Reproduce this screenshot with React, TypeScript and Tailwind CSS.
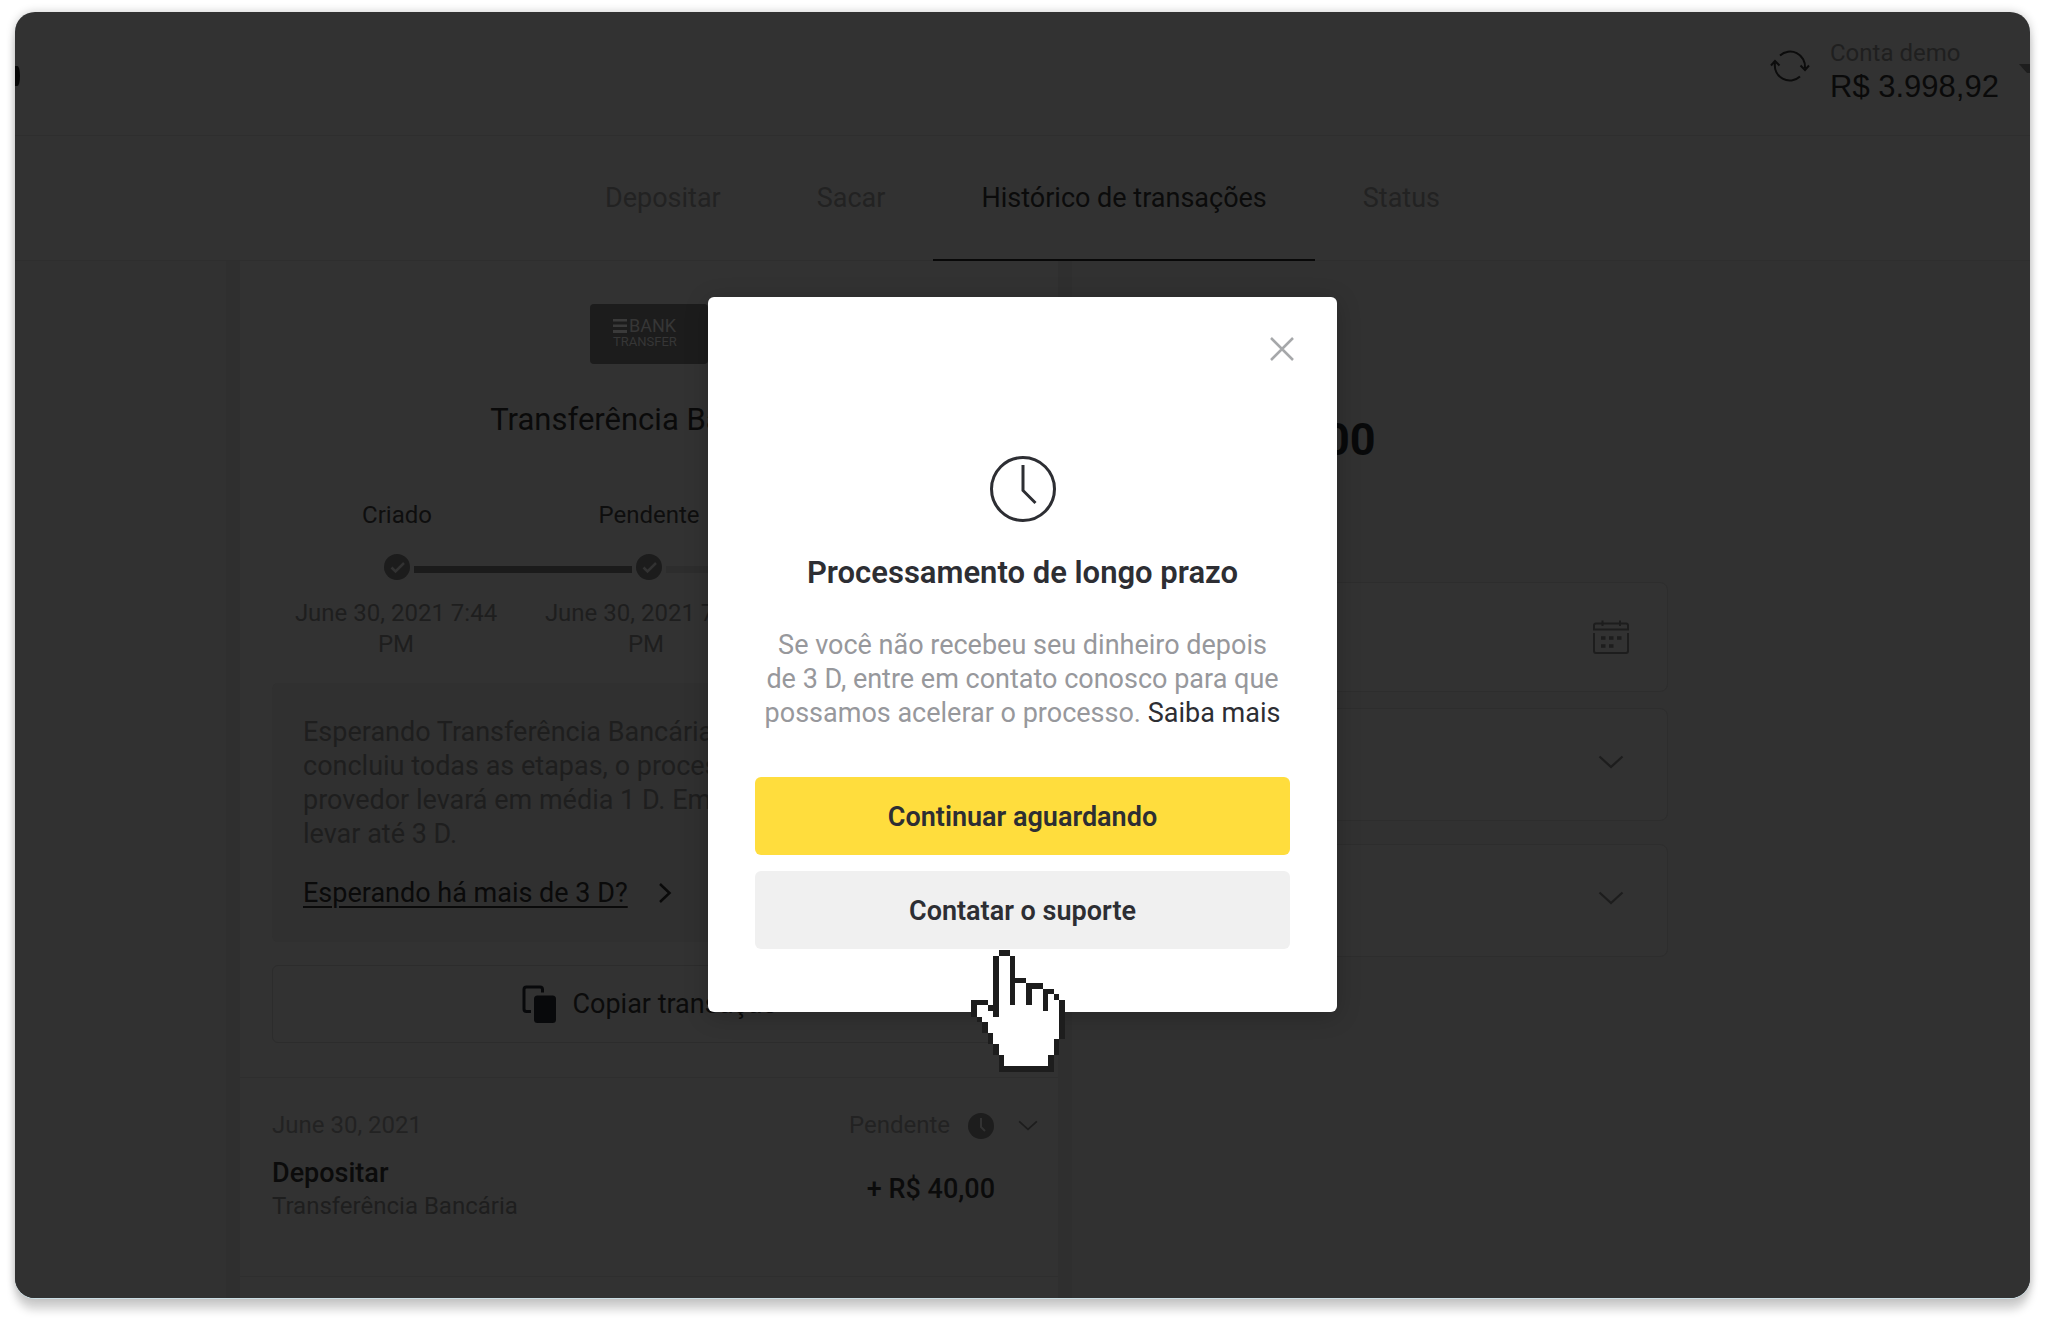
import React from 'react';

interface Tab {
  label: string;
  active?: boolean;
}

const tabs: Tab[] = [
  { label: 'Depositar' },
  { label: 'Sacar' },
  { label: 'Histórico de transações', active: true },
  { label: 'Status' },
];

const steps = ['Criado', 'Pendente', 'Concluído'];
const stepDates = ['June 30, 2021 7:44 PM', 'June 30, 2021 7:44 PM', ''];

const RefreshIcon = () => (
  <svg className="h-9 w-10" viewBox="0 0 40 36" fill="none" stroke="#0c0c0c" strokeWidth="2">
    <path d="M10 7.5A15 15 0 0 1 35 20" />
    <path d="M30.5 17.5L35 22L39 17.5" />
    <path d="M30 28.5A15 15 0 0 1 5 15" />
    <path d="M1 17.5L5 13L9.5 17.5" />
  </svg>
);

const CalendarIcon = () => (
  <svg className="h-[34px] w-9" viewBox="0 0 36 34" fill="none" stroke="#1d1d1d" strokeWidth="2">
    <path d="M1 9.5V5.5Q1 3.500 3 3.500H33Q35 3.500 35 5.500V9.500Z" />
    <path d="M1 13V31Q1 33 3 33H33Q35 33 35 31V13" />
    <path d="M9.500 0.500V6M27 0.500V6" />
    <path d="M8 18H12.500M16 18H20.500M24 18H28.500M8 26H12.500M16 26H20.500" strokeWidth="3.500" />
  </svg>
);

const ChevronDown = ({ className }: { className: string }) => (
  <svg className={className} viewBox="0 0 26 14" fill="none" stroke="#1d1d1d" strokeWidth="2.200">
    <path d="M1.500 1.500L13 12L24.500 1.500" />
  </svg>
);

const StepCheck = () => (
  <svg className="h-[26px] w-[26px]" viewBox="0 0 26 26" fill="none">
    <circle cx="13" cy="13" r="13" fill="#1c1c1c" />
    <path d="M7.500 13.500L11.500 17.500L20 9" stroke="#323232" strokeWidth="2.500" />
  </svg>
);

const CopyIcon = () => (
  <svg className="h-[38px] w-[34px]" viewBox="0 0 34 38" fill="none">
    <path d="M9 26.500H4.500Q2 26.500 2 24V4.500Q2 2 4.500 2H18Q20.500 2 20.500 4.500V7.500" stroke="#08090b" strokeWidth="3" />
    <rect x="12" y="10.500" width="22" height="27.500" rx="3.500" fill="#08090b" />
  </svg>
);

const HandCursor = () => (
  <svg
    className="pointer-events-none absolute top-[653px] left-[263px] h-[122px] w-[94px]"
    viewBox="0 0 17 22"
    shapeRendering="crispEdges"
    aria-hidden="true"
  >
    <path fill="#fff" d="M4 1H8V6H10V7H13V8H15V9H16V16H15V19H14V21H6V19H5V17H4V15H3V13H2V12H1V10H3V11H4Z" />
    <path
      fill="#1d1d1d"
      d="M5 0h2v1h-2zM4 1h1v11h-1zM7 1h1v9h-1zM8 5h2v1h-2zM10 6h3v1h-3zM10 7h1v3h-1zM13 7h2v1h-2zM13 8h1v3h-1zM15 8h1v1h-1zM16 9h1v7h-1zM15 16h1v3h-1zM14 19h1v2h-1zM5 21h10v1h-10zM5 19h1v2h-1zM4 17h1v2h-1zM3 15h1v2h-1zM2 13h1v2h-1zM1 12h1v1h-1zM0 9h1v3h-1zM1 9h2v1h-2zM3 10h1v1h-1z"
    />
  </svg>
);

const Header = () => (
  <header className="flex h-[124px] shrink-0 items-start justify-between border-b border-[#2e2e2e]">
    <div className="mt-[54px] h-5 w-[5px] rounded-r-[100%] bg-[#060606]" />
    <div className="flex items-start">
      <button type="button" aria-label="Atualizar saldo" className="mt-9 mr-5">
        <RefreshIcon />
      </button>
      <div className="mt-[26px] w-[189px]">
        <p className="text-[24px] leading-[31px] text-[#1f1f1f]">Conta demo</p>
        <p className="font-['Liberation_Sans',Arial,sans-serif] text-[31px] leading-9 text-[#0a0a0a]">R$ 3.998,92</p>
      </div>
      <svg className="mt-[52px] h-[10px] w-[11px]" viewBox="0 0 11 10">
        <path d="M0 0H11V9L8 9Z" fill="#1e1e1e" />
      </svg>
    </div>
  </header>
);

const Tabs = () => (
  <nav className="flex h-[125px] shrink-0 justify-center border-b border-[#2e2e2e]">
    {tabs.map((tab) => (
      <a
        key={tab.label}
        href="#"
        className={
          tab.active
            ? '-mb-0.5 border-b-[3px] border-[#080808] px-12 pt-[45px] text-[27px] leading-[34px] text-[#0b0b0b]'
            : 'px-12 pt-[45px] text-[27px] leading-[34px] text-[#222222]'
        }
      >
        {tab.label}
      </a>
    ))}
  </nav>
);

const Progress = () => (
  <div className="px-[31px]">
    <div className="mt-[60px] grid grid-cols-3 text-center text-[24px] leading-[31px] text-[#0e0e0e]">
      {steps.map((step) => (
        <p key={step}>{step}</p>
      ))}
    </div>
    <div className="mt-[23px] flex items-center gap-1 pl-[113px]">
      <StepCheck />
      <div className="mt-1 h-[7px] w-[218px] bg-[#1b1b1b]" />
      <StepCheck />
      <div className="mt-1 h-[7px] w-[218px] bg-[#2d2d2d]" />
    </div>
    <div className="mt-[18px] mr-[6px] grid grid-cols-3 text-center text-[24px] leading-[31px] text-[#1e1e1e]">
      {stepDates.map((date, i) => (
        <p key={i} className="px-4">
          {date}
        </p>
      ))}
    </div>
  </div>
);

const TransactionCard = () => (
  <section className="flex w-[846px] shrink-0 bg-[#2f2f2f] px-[14px]">
    <div className="w-full bg-[#323232] pt-[43px]">
      <div className="mx-auto flex h-[60px] w-[118px] flex-col justify-center rounded-sm bg-[#1c1c1c] pb-1 pl-[23px] text-[#363636]">
        <div className="flex items-center gap-0.5 text-[18px] leading-[18px]">
          <svg className="h-[14px] w-[14px]" viewBox="0 0 14 14" fill="#3a3a3a">
            <path d="M0 0h14v2.500h-14zM0 5.500h14v2.500h-14zM0 11h14v3h-14z" />
          </svg>
          BANK
        </div>
        <div className="text-[13px] leading-[13px]">TRANSFER</div>
      </div>
      <h1 className="mt-9 text-center text-[31px] leading-10 text-[#0a0a0a]">Transferência Bancária</h1>

      <Progress />

      <div className="mx-8 mt-[23px] rounded-md bg-[#303030] px-[31px] pt-8 pb-8 text-[27px] leading-[34px]">
        <p className="text-[#1e1e1e]">
          Esperando Transferência Bancária. Se você
          <br />
          concluiu todas as etapas, o processamento do
          <br />
          provedor levará em média 1 D. Em alguns casos pode
          <br />
          levar até 3 D.
        </p>
        <a href="#" className="mt-[25px] flex items-center text-[#0a0a0a]">
          <span className="underline decoration-2 underline-offset-4">Esperando há mais de 3 D?</span>
          <svg className="ml-[30px] h-5 w-[14px]" viewBox="0 0 14 20" fill="none" stroke="#0a0a0a" strokeWidth="2.500">
            <path d="M2 1L11.500 10L2 19" />
          </svg>
        </a>
      </div>

      <div className="mx-8 mt-[23px]">
        <button
          type="button"
          className="flex h-[78px] w-full items-center justify-center gap-4 rounded-md border border-[#2c2c2c] pl-0.5 text-[27px] leading-[34px] text-[#0b0b0b]"
        >
          <CopyIcon />
          Copiar transação
        </button>
      </div>

      <div className="mt-[34px] border-y border-[#2e2e2e] px-8 pt-8 pb-[54px]">
        <div className="flex items-center text-[24px] leading-[31px] text-[#222222]">
          <p>June 30, 2021</p>
          <p className="ml-auto">Pendente</p>
          <svg className="ml-[18px] h-[26px] w-[26px]" viewBox="0 0 26 26" fill="none">
            <circle cx="13" cy="13" r="13" fill="#1d1d1d" />
            <path d="M13 5V14L17 18" stroke="#323232" strokeWidth="2" />
          </svg>
          <button type="button" aria-label="Mostrar detalhes" className="mr-[-12px] ml-6">
            <ChevronDown className="h-[11px] w-5" />
          </button>
        </div>
        <div className="mt-[15px] flex items-center justify-between pr-[31px]">
          <div>
            <p className="text-[27px] leading-[34px] font-medium text-[#0b0b0b]">Depositar</p>
            <p className="text-[24px] leading-[32px] text-[#1e1e1e]">Transferência Bancária</p>
          </div>
          <p className="text-[27px] leading-[34px] font-medium text-[#0b0b0b]">+ R$ 40,00</p>
        </div>
      </div>
    </div>
  </section>
);

const Filters = () => (
  <aside className="ml-[33px] w-[563px] shrink-0 pt-[153px]">
    <p className="text-[45px] leading-[52px] font-bold text-[#08090a]">R$ 10.000,00</p>
    <div className="mt-[116px] flex h-[110px] items-center justify-end rounded-lg border border-[#2d2d2d] bg-[#323232] pr-[38px]">
      <button type="button" aria-label="Escolher período">
        <CalendarIcon />
      </button>
    </div>
    <button
      type="button"
      aria-label="Tipo de transação"
      className="mt-4 flex h-[113px] w-full items-center justify-end rounded-lg border border-[#2d2d2d] bg-[#323232] pr-[43px] pb-1.5"
    >
      <ChevronDown className="h-[14px] w-[26px]" />
    </button>
    <button
      type="button"
      aria-label="Status da transação"
      className="mt-[23px] flex h-[113px] w-full items-center justify-end rounded-lg border border-[#2d2d2d] bg-[#323232] pr-[43px] pb-1.5"
    >
      <ChevronDown className="h-[14px] w-[26px]" />
    </button>
  </aside>
);

const WaitDialog = () => (
  <div className="absolute inset-0 flex items-start justify-center pt-[285px]">
    <div
      role="dialog"
      aria-labelledby="dialog-title"
      className="relative w-[629px] rounded-md bg-white px-[47px] pb-[63px] text-center text-[27px] shadow-[0_4px_24px_rgba(0,0,0,0.2)]"
    >
      <div className="-mr-1 flex justify-end pt-10">
        <button type="button" aria-label="Fechar">
          <svg className="h-6 w-6" viewBox="0 0 24 24" fill="none" stroke="#a6a8aa" strokeWidth="2.500">
            <path d="M1 1L23 23M23 1L1 23" />
          </svg>
        </button>
      </div>
      <svg className="mx-auto mt-[95px] h-[66px] w-[66px]" viewBox="0 0 66 66" fill="none" stroke="#2d2e33" strokeWidth="3">
        <circle cx="33" cy="33" r="31.500" />
        <path d="M33 9V34.500L45.500 47" />
      </svg>
      <h2 id="dialog-title" className="mt-[31px] text-[31px] leading-10 font-semibold text-[#2d2e33]">
        Processamento de longo prazo
      </h2>
      <p className="mt-[35px] leading-[34px] text-[#97989c]">
        Se você não recebeu seu dinheiro depois
        <br />
        de 3 D, entre em contato conosco para que
        <br />
        possamos acelerar o processo.{' '}
        <a href="#" className="text-[#2d2e33]">
          Saiba mais
        </a>
      </p>
      <button type="button" className="mt-[47px] block h-[78px] w-full rounded-md bg-[#ffdd3d] pt-0.5 font-semibold text-[#2d2e33]">
        Continuar aguardando
      </button>
      <button type="button" className="mt-4 block h-[78px] w-full rounded-md bg-[#f0f0f0] pt-0.5 font-semibold text-[#2d2e33]">
        Contatar o suporte
      </button>
      <HandCursor />
    </div>
  </div>
);

const App: React.FC = () => {
  return (
    <div className="flex min-h-screen bg-white pt-3 pr-[18px] pb-6 pl-[15px] font-['Roboto',sans-serif]">
      <div className="relative flex w-full flex-col overflow-hidden rounded-[20px] bg-[#323232] shadow-[0_1px_0_#c9dde4,0_12px_8px_rgba(0,0,0,0.17),0_0_10px_rgba(0,0,0,0.2)]">
        <Header />
        <Tabs />
        <main className="flex flex-1 bg-[#313131] pl-[211px]">
          <TransactionCard />
          <Filters />
        </main>
        <WaitDialog />
      </div>
    </div>
  );
};

export default App;
